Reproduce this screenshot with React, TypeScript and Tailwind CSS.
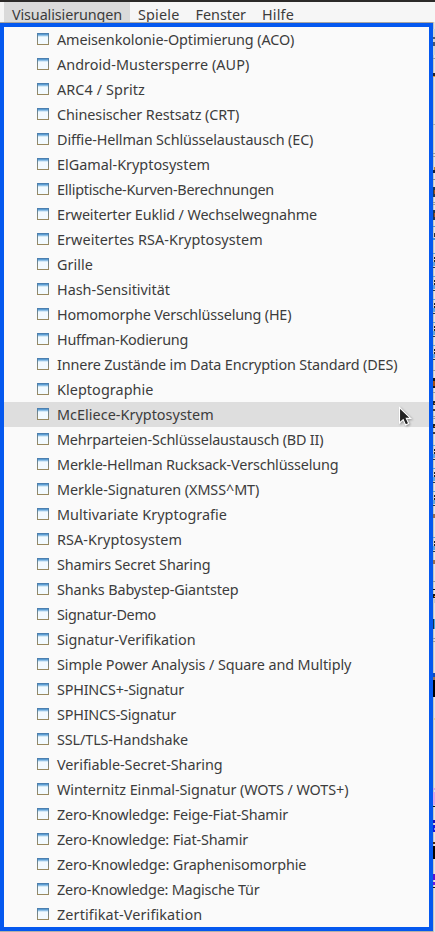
import { useLayoutEffect, useRef, useState } from "react";

const MENUS: [string, number, string][] = [
  ["Visualisierungen", 110, "bg-[#dadada]"],
  ["Spiele", 41.5, ""],
  ["Fenster", 50.5, ""],
  ["Hilfe", 32, ""],
];

const ITEMS: [string, number][] = [
  ["Ameisenkolonie-Optimierung (ACO)", 237.3],
  ["Android-Mustersperre (AUP)", 192.3],
  ["ARC4 / Spritz", 88],
  ["Chinesischer Restsatz (CRT)", 182.3],
  ["Diffie-Hellman Schlüsselaustausch (EC)", 256.3],
  ["ElGamal-Kryptosystem", 153],
  ["Elliptische-Kurven-Berechnungen", 217],
  ["Erweiterter Euklid / Wechselwegnahme", 260],
  ["Erweitertes RSA-Kryptosystem", 205.7],
  ["Grille", 36],
  ["Hash-Sensitivität", 113],
  ["Homomorphe Verschlüsselung (HE)", 234.3],
  ["Huffman-Kodierung", 131],
  ["Innere Zustände im Data Encryption Standard (DES)", 340.3],
  ["Kleptographie", 96.5],
  ["McEliece-Kryptosystem", 156.7],
  ["Mehrparteien-Schlüsselaustausch (BD II)", 266.3],
  ["Merkle-Hellman Rucksack-Verschlüsselung", 281.4],
  ["Merkle-Signaturen (XMSS^MT)", 202.3],
  ["Multivariate Kryptografie", 170],
  ["RSA-Kryptosystem", 125],
  ["Shamirs Secret Sharing", 153.4],
  ["Shanks Babystep-Giantstep", 181.5],
  ["Signatur-Demo", 99],
  ["Signatur-Verifikation", 138.5],
  ["Simple Power Analysis / Square and Multiply", 294.3],
  ["SPHINCS+-Signatur", 127],
  ["SPHINCS-Signatur", 119],
  ["SSL/TLS-Handshake", 131],
  ["Verifiable-Secret-Sharing", 165.6],
  ["Winternitz Einmal-Signatur (WOTS / WOTS+)", 291.4],
  ["Zero-Knowledge: Feige-Fiat-Shamir", 231],
  ["Zero-Knowledge: Fiat-Shamir", 191],
  ["Zero-Knowledge: Graphenisomorphie", 249.3],
  ["Zero-Knowledge: Magische Tür", 202.5],
  ["Zertifikat-Verifikation", 145.3],
];

// Label whose tracking is adjusted so that it fills the given width.
function Label({ text, width }: { text: string; width: number }) {
  const ref = useRef<HTMLSpanElement>(null);
  const [spacing, setSpacing] = useState(0);
  useLayoutEffect(() => {
    if (!ref.current) return;
    const natural = ref.current.getBoundingClientRect().width - spacing * text.length;
    setSpacing((width - natural) / text.length);
  }, [text, width]);
  return (
    <span ref={ref} className="whitespace-pre" style={{ letterSpacing: `${spacing}px` }}>
      {text}
    </span>
  );
}

function WindowIcon() {
  return (
    <svg width="12" height="12" viewBox="0 0 12 12" shapeRendering="crispEdges" className="mb-px shrink-0">
      <defs>
        <linearGradient id="frame" x1="0" y1="0" x2="0" y2="1">
          <stop offset="0" stopColor="#4d7fae" />
          <stop offset="1" stopColor="#a08c5c" />
        </linearGradient>
      </defs>
      <rect width="12" height="12" fill="url(#frame)" />
      <rect x="1" y="3" width="10" height="8" fill="#f2faff" />
      <rect width="12" height="1" fill="#4b7fb0" />
      <rect x="1" y="1" width="10" height="1" fill="#5c9dd2" />
      <rect x="1" y="2" width="10" height="1" fill="#8fc0e6" />
      <rect x="1" y="3" width="10" height="1" fill="#d3e9f7" />
      <rect y="11" width="12" height="1" fill="#99895f" />
    </svg>
  );
}

// Sliver of the window behind the menu: [y, height, colour, x].
const SLIVER: [number, number, string, number][] = [
  [29, 26, "#d2d2d2", 0], [37, 2, "#555b66", 0], [42, 4, "#47556e", 0], [58, 1, "#999999", 0],
  [73, 3, "#262626", 0], [76, 1, "#dd9b40", 0], [124, 1, "#aaaaaa", 0], [153, 1, "#999999", 0],
  [156, 1, "#999999", 0], [167, 3, "#be8734", 1], [170, 3, "#16203b", 0], [179, 1, "#888888", 0],
  [187, 10, "#23374f", 0], [190, 4, "#a45424", 1], [202, 1, "#999999", 0], [204, 1, "#999999", 0],
  [210, 10, "#23374f", 0], [213, 4, "#a45424", 1], [226, 1, "#5792c4", 0], [233, 4, "#333333", 1], [238, 2, "#4e8dca", 0],
  [370, 1, "#999999", 0], [378, 10, "#171717", 0], [381, 5, "#a55012", 0], [392, 1, "#999999", 0],
  [401, 4, "#25262a", 0], [403, 1, "#cb8840", 1], [409, 2, "#443a37", 0], [416, 1, "#999999", 0],
  [418, 1, "#999999", 0], [424, 4, "#24201f", 0], [426, 1, "#b77027", 1], [432, 2, "#443a37", 0],
  [514, 4, "#956e52", 0], [560, 4, "#956e52", 0], [581, 1, "#999999", 0], [589, 1, "#111111", 0],
  [594, 4, "#1d1712", 0], [596, 1, "#e39a32", 1], [599, 4, "#c8c8c8", 0], [619, 10, "#14304e", 0],
  [619, 10, "#4ba5d8", 1], [638, 1, "#999999", 0], [641, 1, "#999999", 0], [673, 4, "#164cb2", 0],
  [677, 3, "#957456", 0], [680, 17, "#000000", 0], [718, 2, "#e6d58d", 1],
  [788, 2, "#d9a5df", 0], [792, 13, "#dfa5e4", 0], [806, 1, "#111111", 0], [820, 3, "#1d10b9", 0],
  [825, 7, "#1717dc", 0], [828, 2, "#77a0ed", 1], [842, 2, "#47250d", 0], [846, 13, "#090400", 0],
  [874, 6, "#5c12ce", 0], [882, 3, "#6a17df", 0], [887, 1, "#111111", 0],
];
const LIST_ICONS = [253, 276, 299, 322, 345, 445, 468, 491, 537];

function BackgroundSliver() {
  return (
    <svg width="2" height="910" viewBox="0 22 2 910" shapeRendering="crispEdges" className="shrink-0">
      <rect y="22" width="2" height="910" fill="#e4e4e4" />
      <rect y="22" width="1" height="910" fill="#c4c4c4" />
      {LIST_ICONS.map((y) => (
        <g key={y}>
          <rect y={y} width="2" height="1" fill="#629cca" />
          <rect x="1" y={y + 4} width="1" height="5" fill="#222222" />
          <rect x="1" y={y + 6} width="1" height="1" fill="#eeeeee" />
          <rect y={y + 9} width="2" height="4" fill="#68a5d4" />
          <rect y={y + 14} width="2" height="1" fill="#26384d" />
        </g>
      ))}
      {SLIVER.map(([y, h, fill, x]) => (
        <rect key={`${y}-${x}`} x={x} y={y} width={2 - x} height={h} fill={fill} />
      ))}
    </svg>
  );
}

function Cursor() {
  return (
    <svg
      width="18"
      height="24"
      viewBox="0 0 18 24"
      className="absolute left-[394px] top-[4px] drop-shadow-[1px_1px_1px_rgba(0,0,0,0.35)]"
    >
      <path
        d="M1.5 1.5V17L5.2 13.6L7.6 19L10.7 17.6L8.3 12.4H12.7Z"
        fill="#222222"
        stroke="#ffffff"
        strokeWidth="1.1"
      />
    </svg>
  );
}

export default function App() {
  return (
    <div className="flex h-[932px] w-[435px] flex-col overflow-hidden bg-[#f6f6f6] font-['Noto_Sans','Open_Sans',sans-serif] text-[14.4px] leading-[25px] text-[#3c3c3c]">
      <div className="h-[2px] shrink-0 bg-[#2c2a29]" />
      <nav className="flex h-5 shrink-0 pl-1">
        {MENUS.map(([text, width, bg]) => (
          <div key={text} className={`flex h-5 items-start px-2 ${bg}`}>
            <Label text={text} width={width} />
          </div>
        ))}
      </nav>
      <div className="flex h-[910px] shrink-0">
        <div className="w-[433px] shrink-0 border-t border-b border-t-[#aaa69f] border-b-[#b5b0a8]">
          <ul className="h-[908px] border-4 border-[#0458ef] bg-[#fafafa]">
            {ITEMS.map(([text, width], i) => (
              <li
                key={text}
                className={`relative flex h-[25px] items-center gap-2 pl-[33px] ${i === 15 ? "bg-[#dedede]" : ""}`}
              >
                <WindowIcon />
                <Label text={text} width={width} />
                {i === 15 && <Cursor />}
              </li>
            ))}
          </ul>
        </div>
        <BackgroundSliver />
      </div>
    </div>
  );
}
